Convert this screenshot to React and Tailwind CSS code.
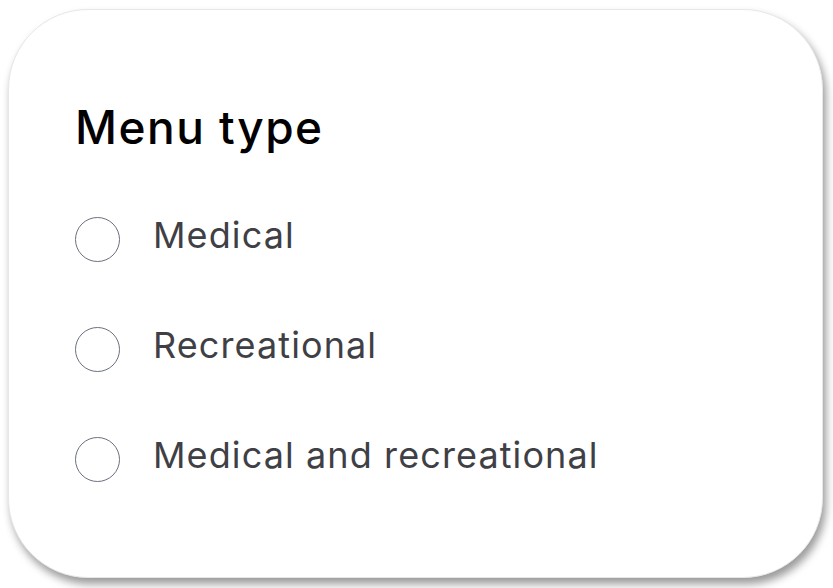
const OPTIONS = ['Medical', 'Recreational', 'Medical and recreational'];

export default function App() {
  return (
    <div className="w-[833px] h-[588px] bg-white pt-[9px] pl-[8px]" style={{ fontFamily: 'Inter, "Noto Sans", sans-serif' }}>
      <div className="w-[815px] h-[569px] bg-white rounded-[80px] border border-gray-200 shadow-[3px_6px_8px_rgba(0,0,0,0.4)] pl-[66px] pt-[94px]">
        <h2 className="text-[46px] leading-[1] font-medium text-black tracking-[1.5px]">Menu type</h2>
        <div className="mt-[67px] flex flex-col gap-[66px]">
          {OPTIONS.map(o => (
            <label key={o} className="flex items-center gap-[33px] h-[44px]">
              <span className="w-[45px] h-[45px] rounded-full border-[1.8px] border-[#6b7080] flex-shrink-0" />
              <span className="text-[36px] leading-[1] text-[#3f3f46] tracking-[1.1px] -mt-[9px]">{o}</span>
            </label>
          ))}
        </div>
      </div>
    </div>
  );
}
